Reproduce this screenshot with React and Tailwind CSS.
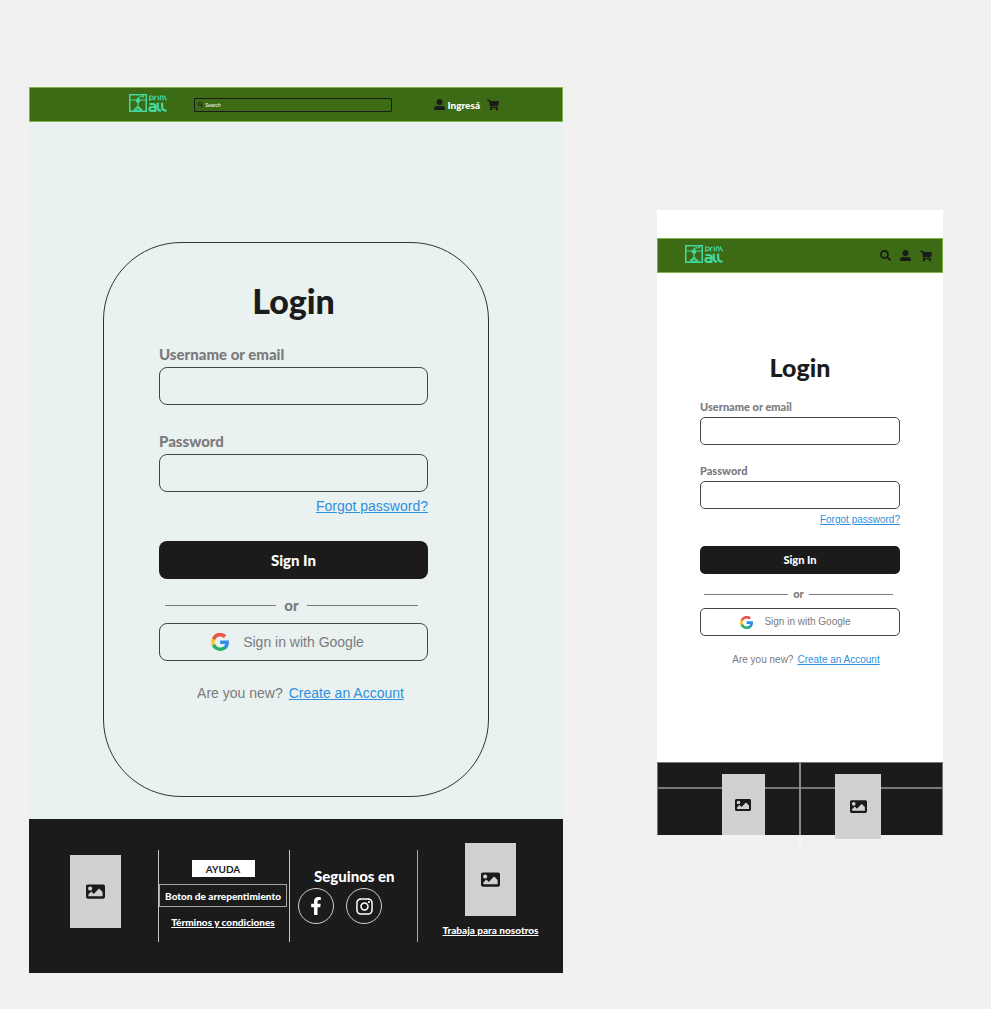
import { FaUserAlt, FaSearch, FaShoppingCart, FaImage, FaFacebookF, FaInstagram } from "react-icons/fa";

function Logo() {
  return (
    <svg viewBox="0 0 38 18" className="mb-1 h-[18px] w-[38px] shrink-0" fill="none" stroke="#45d9a0" role="img" aria-label="Print all">
      <rect x="0.75" y="0.75" width="16.5" height="16.5" strokeWidth="1.5" />
      <path d="M1 6h6M11 6h6" strokeWidth="1.1" />
      <path d="M9 5c0-1.800 1-2.300 3-2.300h2.500V1" strokeWidth="1.100" />
      <circle cx="9" cy="6.500" r="2.100" fill="#45d9a0" strokeWidth="0.600" />
      <path d="M9 8v4" strokeWidth="1.300" />
      <path d="M4.800 16.500c0-1.400.7-2 1.900-2.200l1.100-1.800h2.400l1.100 1.800c1.200.2 1.900.8 1.900 2.200z" fill="#45d9a0" strokeWidth="0.400" />
      <path d="M7.500 14.600l1.500 1.300 1.500-1.300" stroke="#3d6a14" strokeWidth="0.900" />
      <path d="M20.700 7V2h2c2.300 0 2.300 3.400 0 3.400h-1.200M25.600 6.300V4.200c0-1.400.7-2.200 2-2.200M29.200 6.300V1.700M31.300 6.300V3.600c0-2.200 2.700-2.200 2.700 0v2.700M35.600 1.500v1.700l2 3.100" strokeWidth="1.200" />
      <path d="M20.500 10h3.300c1.900 0 2.600 1 2.600 2.500v4.400h-3.900c-2.700 0-2.700-3.900 0-3.900h3M28.700 8.800v3.900c0 2.500 1 4 3.400 4M33.100 8.800v3.900c0 2.500 1.200 4 4.500 4" strokeWidth="2.200" />
    </svg>
  );
}

function GoogleMark({ className }) {
  return (
    <svg viewBox="0 0 24 24" className={className} aria-hidden="true">
      <path fill="#2f8eea" d="M24 12.300c0-.9-.1-1.600-.2-2.400H12.200v4.700h6.600c-.3 1.500-1.100 2.800-2.400 3.700v3.100h3.900c2.300-2.200 3.700-5.300 3.700-9.100z" />
      <path fill="#27b06a" d="M12.200 24c3.300 0 6-1.100 8.100-2.900l-3.900-3.100c-1.100.7-2.500 1.200-4.200 1.200-3.200 0-5.900-2.100-6.800-5H1.300v3.200C3.400 21.300 7.500 24 12.200 24z" />
      <path fill="#fbc53c" d="M5.400 14.200a7.200 7.200 0 0 1 0-4.500V6.600H1.300a12 12 0 0 0 0 10.800z" />
      <path fill="#ea5548" d="M12.200 4.800c1.800 0 3.400.6 4.700 1.800l3.500-3.500A12 12 0 0 0 1.300 6.600l4.100 3.100c.9-2.900 3.600-4.900 6.800-4.900z" />
    </svg>
  );
}

const display = "font-['Lato',sans-serif] font-black";

function Field({ id, label, type, compact }) {
  return (
    <div className="flex flex-col">
      <label
        htmlFor={id}
        className={`${display} text-[#7b7b7b] ${compact ? "text-[11px] leading-4" : "text-[15px] leading-5"}`}
      >
        {label}
      </label>
      <input
        id={id}
        type={type}
        className={`w-full border border-[#444] bg-transparent outline-none ${
          compact ? "mt-[2px] h-7 rounded-[5px] px-2 text-[11px]" : "mt-[3px] h-[38px] rounded-lg px-3 text-sm"
        }`}
      />
    </div>
  );
}

function LoginForm({ prefix, compact = false }) {
  const button = compact ? "h-7 rounded-[5px]" : "h-[38px] rounded-lg";
  const small = compact ? "text-[10px] leading-4" : "text-sm leading-5";
  const link = "text-[#2f90dd] underline";
  return (
    <form className="flex flex-col font-['Liberation_Sans',Arial,sans-serif]" onSubmit={(e) => e.preventDefault()}>
      <h1 className={`${display} text-center text-[#1b1b1b] ${compact ? "text-[25px] leading-7" : "text-[34px] leading-9"}`}>
        Login
      </h1>
      <div className={compact ? "mt-[18px]" : "mt-[25px]"}>
        <Field id={`${prefix}-user`} label="Username or email" type="text" compact={compact} />
      </div>
      <div className={compact ? "mt-[18px]" : "mt-[26px]"}>
        <Field id={`${prefix}-password`} label="Password" type="password" compact={compact} />
      </div>
      <a href="#forgot" className={`${link} ${small} self-end ${compact ? "mt-[3px]" : "mt-1"}`}>
        Forgot password?
      </a>
      <button
        type="submit"
        className={`${display} ${button} bg-[#1b1b1b] text-white ${compact ? "mt-[18px] text-[11px]" : "mt-[25px] text-[15px]"}`}
      >
        Sign In
      </button>
      <div
        className={`${display} flex items-center text-[#7b7b7b] ${
          compact ? "mt-3 gap-[5px] pr-[7px] pl-1 text-[11px] leading-4" : "mt-4 gap-2 pr-[10px] pl-[6px] text-[15px] leading-5"
        }`}
      >
        <span className="h-px flex-1 bg-[#7b7b7b]" />
        or
        <span className="h-px flex-1 bg-[#7b7b7b]" />
      </div>
      <button
        type="button"
        className={`${button} ${small} flex items-center justify-center border border-[#444] text-[#7b7b7b] ${
          compact ? "mt-[6px] gap-[11px] pr-[9px]" : "mt-2 gap-[14px] pr-3"
        }`}
      >
        <GoogleMark className={compact ? "size-[13px]" : "size-[18px]"} />
        Sign in with Google
      </button>
      <p
        className={`${small} flex justify-center text-[#7b7b7b] ${
          compact ? "mt-4 gap-1 pl-3" : "mt-[22px] gap-[6px] pl-[14px]"
        }`}
      >
        Are you new?
        <a href="#create" className={link}>
          Create an Account
        </a>
      </p>
    </form>
  );
}

function Placeholder({ className, iconClass }) {
  return (
    <div className={`flex items-center justify-center bg-[#d1d1d1] text-[#1b1b1b] ${className}`}>
      <FaImage className={iconClass} />
    </div>
  );
}

const bar = "flex h-[35px] items-center border border-[#7cb748] bg-[#3d6a14]";

function DesktopScreen() {
  return (
    <section className="mt-[87px] flex min-w-0 flex-col bg-[#eaf1f1]">
      <header className={`${bar} pr-[63px] pl-[99px]`}>
        <Logo />
        <label className="ml-[27px] flex h-[14px] min-w-0 flex-1 items-center gap-[2px] rounded-[1px] border border-[#1b1b1b] px-[3px]">
          <FaSearch className="size-[5px] shrink-0 text-[#1b1b1b]" />
          <input
            type="search"
            aria-label="Search"
            placeholder="Search"
            className="min-w-0 flex-1 bg-transparent font-['Liberation_Sans',sans-serif] text-[5px] leading-[8px] text-white outline-none placeholder:text-white"
          />
        </label>
        <a href="#login" className={`${display} ml-[42px] flex items-center gap-[3px] text-[10px] leading-4 text-white`}>
          <FaUserAlt className="size-[11px] text-[#1b1b1b]" />
          Ingresá
        </a>
        <button type="button" aria-label="Cart" className="ml-[7px] text-[#1b1b1b]">
          <FaShoppingCart className="size-[12px]" />
        </button>
      </header>

      <main className="px-[74px] pt-[120px] pb-[22px]">
        <div className="rounded-[78px] border border-[#333] pt-10 pr-[60px] pb-[93px] pl-[55px]">
          <LoginForm prefix="desktop" />
        </div>
      </main>

      <footer className="grid grid-cols-[129fr_132fr_128fr_145fr] items-start bg-[#1b1b1b] pt-6 pb-[31px] text-white">
        <div className="flex justify-center pt-3 pl-[3px]">
          <Placeholder className="h-[73px] w-[51px]" iconClass="size-[19px]" />
        </div>
        <div className={`${display} mt-[7px] flex h-[92px] flex-col items-center border-x border-[#c4c4c4] pt-[10px] pr-[2px] text-[10px] leading-4`}>
          <button type="button" className="h-[17px] w-[63px] bg-white font-bold text-[#1b1b1b]">
            AYUDA
          </button>
          <button type="button" className="mt-[7px] h-[23px] self-stretch border border-[#a5a5a5] whitespace-nowrap">
            Boton de arrepentimiento
          </button>
          <a href="#terms" className="mt-[7px] whitespace-nowrap underline">
            Términos y condiciones
          </a>
        </div>
        <div className="mt-[7px] h-[92px] border-r border-[#a5a5a5] pt-4 pl-2">
          <h2 className={`${display} pl-4 text-[15px] leading-5 whitespace-nowrap`}>Seguinos en</h2>
          <div className="mt-[2px] flex gap-3">
            <a href="#facebook" aria-label="Facebook" className="flex size-9 items-center justify-center rounded-full border border-[#d1d1d1]">
              <FaFacebookF className="size-[18px]" />
            </a>
            <a href="#instagram" aria-label="Instagram" className="flex size-9 items-center justify-center rounded-full border border-[#d1d1d1]">
              <FaInstagram className="size-[19px]" />
            </a>
          </div>
        </div>
        <div className="flex flex-col items-center">
          <Placeholder className="h-[73px] w-[51px]" iconClass="size-[19px]" />
          <a href="#jobs" className={`${display} mt-[6px] text-[10px] leading-4 whitespace-nowrap underline`}>
            Trabaja para nosotros
          </a>
        </div>
      </footer>
    </section>
  );
}

function MobileScreen() {
  return (
    <section className="mt-[210px] flex min-w-0 flex-col bg-white pt-7">
      <header className={`${bar} pr-[10px] pl-[27px] text-[#1b1b1b]`}>
        <Logo />
        <div className="ml-auto flex gap-[9px]">
          <button type="button" aria-label="Search">
            <FaSearch className="size-[11px]" />
          </button>
          <button type="button" aria-label="Account">
            <FaUserAlt className="size-[11px]" />
          </button>
          <button type="button" aria-label="Cart">
            <FaShoppingCart className="size-[12px]" />
          </button>
        </div>
      </header>

      <main className="px-[43px] pt-20 pb-[94px]">
        <LoginForm prefix="mobile" compact />
      </main>

      <footer className="relative grid h-[73px] grid-cols-2 border-x border-t border-[#777] bg-[#1b1b1b]">
        <span className="absolute inset-x-0 top-6 h-[2px] bg-[#777]" />
        <span className="absolute inset-y-0 left-1/2 w-[2px] -translate-x-1/2 bg-[#8a8a8a]" />
        <span className="absolute top-full left-1/2 h-3 w-[2px] -translate-x-1/2 bg-[#f6f6f6]" />
        <div className="relative flex justify-center pt-[11px] pl-7">
          <Placeholder className="h-[61px] w-[43px]" iconClass="size-[16px]" />
        </div>
        <div className="relative flex justify-center pt-[11px] pr-[26px]">
          <Placeholder className="h-[65px] w-[46px]" iconClass="size-[17px]" />
        </div>
      </footer>
    </section>
  );
}

export default function App() {
  return (
    <div className="grid min-h-screen grid-cols-[534fr_286fr] items-start gap-[94px] bg-[#f1f1f1] pr-12 pl-[29px]">
      <DesktopScreen />
      <MobileScreen />
    </div>
  );
}
